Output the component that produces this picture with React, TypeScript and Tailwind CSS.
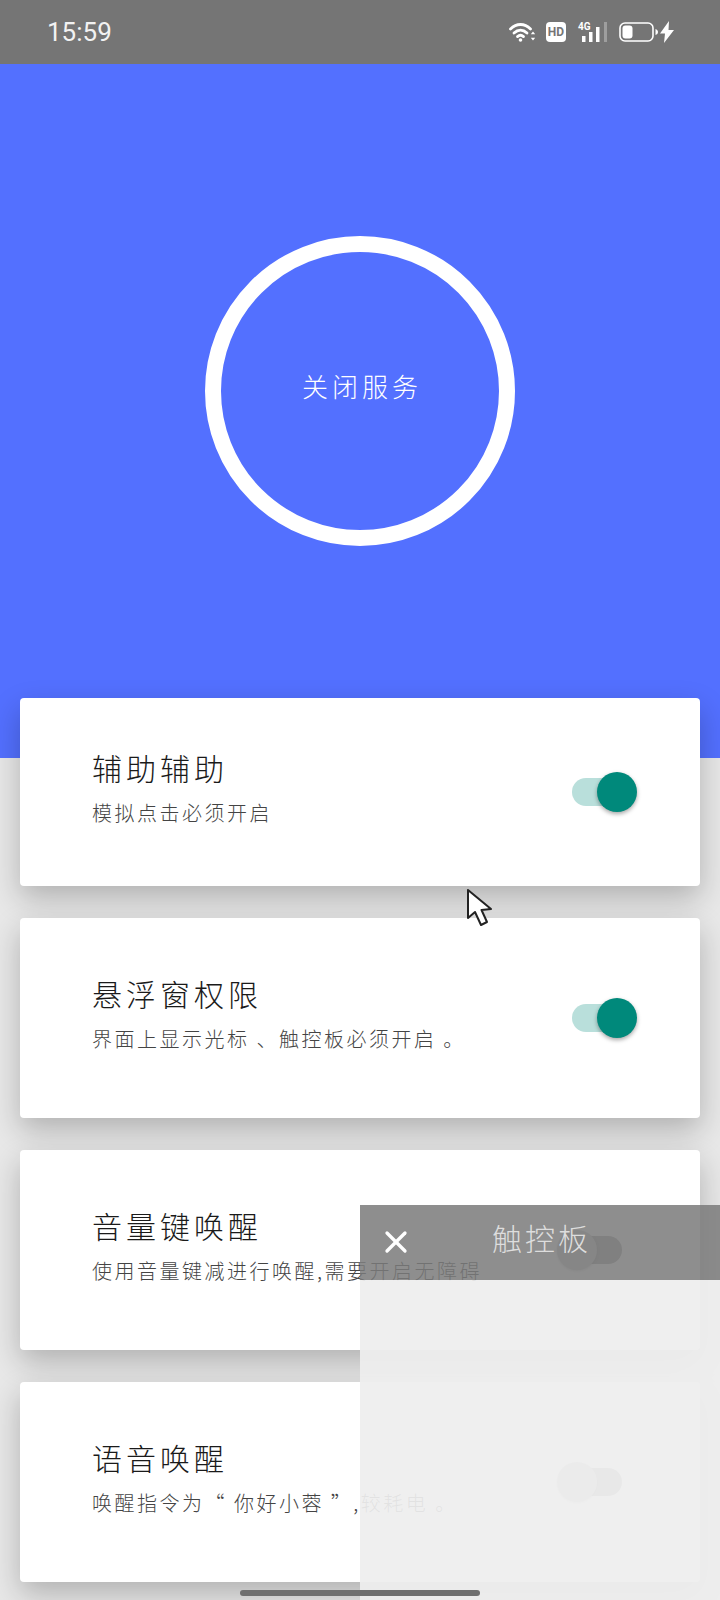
import { X } from 'lucide-react';

const FONT = "font-['Noto_Sans_CJK_SC','Noto_Sans_CJK_TC',sans-serif]";

interface Row {
  title: string;
  desc: string;
  enabled: boolean;
  height: string;
}

const rows: Row[] = [
  { title: '辅助辅助', desc: '模拟点击必须开启', enabled: true, height: 'h-[188px]' },
  { title: '悬浮窗权限', desc: '界面上显示光标 、触控板必须开启 。', enabled: true, height: 'h-[200px]' },
  { title: '音量键唤醒', desc: '使用音量键减进行唤醒,需要开启无障碍', enabled: false, height: 'h-[200px]' },
  { title: '语音唤醒', desc: '唤醒指令为“ 你好小蓉 ”,较耗电 。', enabled: false, height: 'h-[200px]' },
];

function Toggle({ enabled }: { enabled: boolean }) {
  return (
    <div className="relative h-10 w-[65px] shrink-0">
      <div
        className={`absolute left-0 top-[6px] h-7 w-[50px] rounded-full ${
          enabled ? 'bg-[#b9dfdb]' : 'bg-[#9e9e9e]'
        }`}
      />
      <div
        className={`absolute top-0 h-10 w-10 rounded-full ${
          enabled
            ? 'left-[25px] bg-[#00897b] shadow-[0_2px_4px_rgba(0,0,0,0.35)]'
            : 'left-[-15px] bg-[#c8c8c8] shadow-[0_1px_3px_rgba(0,0,0,0.2)]'
        }`}
      />
    </div>
  );
}

function SettingCard({ title, desc, enabled, height }: Row) {
  return (
    <div
      className={`flex ${height} items-center justify-between rounded-[4px] bg-white pl-[72px] pr-[63px] shadow-[0_12px_30px_rgba(0,0,0,0.24)]`}
    >
      <div className="flex flex-col pb-[9px]">
        <h3 className="text-[30px] font-light leading-[34px] tracking-[4px] text-[#1a1a1a]">{title}</h3>
        <p className="mt-[16px] whitespace-nowrap text-[20px] font-light leading-[26px] tracking-[2.5px] text-[#444]">
          {desc}
        </p>
      </div>
      <Toggle enabled={enabled} />
    </div>
  );
}

function StatusIcons() {
  return (
    <div className="flex items-center text-white">
      {/* wifi */}
      <svg width="27" height="20" viewBox="0 0 27 20" fill="none" stroke="white" strokeWidth="2.800" strokeLinecap="round">
        <path d="M1.500 7C7.500 1 15.500 1 21.500 7" />
        <path d="M5 11C9 7.200 14 7.200 18 11" />
        <path d="M8.500 14.600C10.300 13 12.700 13 14.500 14.600" />
        <circle cx="11.500" cy="18" r="1.800" fill="white" stroke="none" />
        <path d="M24 9.500l-2.200 2.800h4.400zM24 18.500l-2.200-2.800h4.400z" fill="white" stroke="none" />
      </svg>
      <span className="ml-[10px] flex h-5 w-5 items-center justify-center rounded-[4px] bg-white font-['Roboto',sans-serif] text-[12px] font-bold leading-none text-[#757575]">
        HD
      </span>
      <div className="relative ml-3 h-5 w-[30px]">
        <span className="absolute left-0 top-0 font-['Roboto',sans-serif] text-[10px] font-bold leading-[10px]">4G</span>
        <svg className="absolute left-0 top-0" width="30" height="20" viewBox="0 0 30 20" fill="white">
          <rect x="4" y="14" width="3.500" height="6" />
          <rect x="11" y="10" width="3.500" height="10" />
          <rect x="18" y="5" width="3.500" height="15" />
          <rect x="26" y="0" width="3" height="20" opacity="0.3" />
        </svg>
      </div>
      <svg className="ml-[11px]" width="40" height="20" viewBox="0 0 40 20" fill="none">
        <rect x="1" y="1" width="33" height="18" rx="5" stroke="white" strokeWidth="1.600" />
        <rect x="3.500" y="3.500" width="10" height="13" rx="3" fill="white" />
        <path d="M36.500 7v6c1.500-.5 2.500-1.500 2.500-3s-1-2.500-2.500-3z" fill="white" />
      </svg>
      <svg className="ml-[1px]" width="14" height="22" viewBox="0 0 14 22" fill="white">
        <path d="M9 0L0 12.500h5L4 22l10-13H8.500z" />
      </svg>
    </div>
  );
}

function Cursor() {
  return (
    <svg className="absolute left-[466px] top-[888px]" width="28" height="40" viewBox="0 0 28 40">
      <path
        d="M2 2L2 30L9 24L15 37L21 34L15.500 22L25 21Z"
        fill="white"
        stroke="#222"
        strokeWidth="2"
        strokeLinejoin="round"
      />
    </svg>
  );
}

function TouchpadPanel() {
  return (
    <div className="absolute left-[360px] top-[1205px] flex h-[395px] w-[360px] flex-col">
      <div className="relative flex h-[75px] items-center justify-center bg-[rgba(122,122,122,0.85)]">
        <X className="absolute left-[18px] top-[19px] h-9 w-9 text-white" strokeWidth={2.2} />
        <span className="mb-3 pl-[3px] text-[30px] font-light leading-[34px] tracking-[3px] text-[#ddd]">触控板</span>
      </div>
      <div className="flex-1 bg-[rgba(238,238,238,0.93)]" />
    </div>
  );
}

export default function App() {
  return (
    <div className={`relative h-[1600px] w-full overflow-hidden bg-[#e8e8e8] ${FONT}`}>
      <div className="flex h-16 items-center justify-between bg-[#757575] pl-[47px] pr-[46px]">
        <span className="font-['Roboto',sans-serif] text-[26px] font-normal leading-none text-[#f2f2f2]">15:59</span>
        <StatusIcons />
      </div>

      <div className="flex h-[694px] items-center justify-center bg-[#5370ff] pb-10">
        <div className="flex h-[310px] w-[310px] items-center justify-center rounded-full border-[16px] border-white">
          <span className="mb-[10px] pl-[4px] text-[26px] font-light leading-none tracking-[4px] text-white">关闭服务</span>
        </div>
      </div>

      <div className="-mt-[60px] flex flex-col gap-8 px-5">
        {rows.map((row) => (
          <SettingCard key={row.title} {...row} />
        ))}
      </div>

      <Cursor />
      <TouchpadPanel />

      <div className="absolute bottom-1 left-[240px] h-[6px] w-[240px] rounded-full bg-[#6f6f6f]" />
    </div>
  );
}
